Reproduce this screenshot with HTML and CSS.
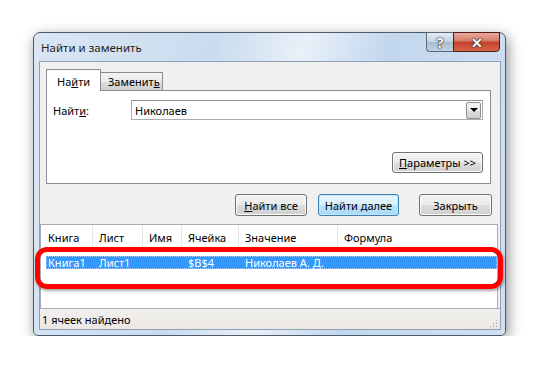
FILE: index.html
```html
<!DOCTYPE html>
<html lang="ru">
  <head>
    <meta charset="UTF-8" />
    <title>Найти и заменить</title>
    <link rel="stylesheet" href="styles.css">
  </head>
  <body>
    <div class="window">
      <div class="titlebar">
        <span class="title">Найти и заменить</span>
        <div class="caption-btn help">?</div>
        <div class="caption-btn close">✕</div>
      </div>

      <div class="client">
        <div class="tabs">
          <div class="tab-strip">
            <div class="tab active">На<u>й</u>ти</div>
            <div class="tab">Заменит<u>ь</u></div>
          </div>
          <div class="tab-panel">
            <div class="find-row">
              <label class="find-label">Найт<u>и</u>:</label>
              <div class="combo">
                <span>Николаев</span>
                <div class="combo-arrow"></div>
              </div>
            </div>
            <div class="options-row">
              <button class="btn"><u>П</u>араметры &gt;&gt;</button>
            </div>
          </div>
        </div>

        <div class="actions">
          <button class="btn btn-all"><u>Н</u>айти все</button>
          <button class="btn btn-default">Найти <u>д</u>алее</button>
          <button class="btn btn-close">Закрыть</button>
        </div>

        <div class="results">
          <div class="results-head">
            <div class="col c1">Книга</div>
            <div class="col c2">Лист</div>
            <div class="col c3">Имя</div>
            <div class="col c4">Ячейка</div>
            <div class="col c5">Значение</div>
            <div class="col c6">Формула</div>
          </div>
          <div class="result-row">
            <div class="col c1">Книга1</div>
            <div class="col c2">Лист1</div>
            <div class="col c3"></div>
            <div class="col c4">$B$4</div>
            <div class="col c5">Николаев А. Д.</div>
            <div class="col c6"></div>
          </div>
          <div class="highlight"></div>
        </div>

        <div class="statusbar">
          <span>1 ячеек найдено</span>
          <div class="grip"></div>
        </div>
      </div>
    </div>
  </body>
</html>
```

FILE: styles.css
```css
* {
  margin: 0;
  padding: 0;
  box-sizing: border-box;
}

body {
  background-color: #ffffff;
  font-family: "Noto Sans", "Liberation Sans", sans-serif;
  font-size: 11px;
  color: #000;
  padding: 32px 0 0 33px;
}

u {
  text-decoration: underline;
  text-underline-offset: 1px;
}

/* Окно */
.window {
  width: 473px;
  height: 304px;
  border: 1px solid #4f5b69;
  border-radius: 7px 7px 5px 5px;
  padding: 0 4px 5px 5px;
  background: linear-gradient(100deg, #d9e6f4 0%, #c9dcef 35%, #e9f0f9 52%, #c2d7ee 68%, #cfe0f2 100%);
  box-shadow: 2px 4px 14px rgba(0, 0, 0, 0.45);
  display: flex;
  flex-direction: column;
}

.titlebar {
  height: 28px;
  display: flex;
  align-items: flex-start;
}

.title {
  flex: 1;
  padding: 7px 0 0 2px;
  font-size: 11.5px;
  color: #1e1e1e;
}

.caption-btn {
  height: 20px;
  margin-top: -1px;
  border: 1px solid #5d6673;
  display: flex;
  justify-content: center;
  align-items: center;
  color: #fff;
  font-weight: bold;
  text-shadow: 0 0 1px #222, 0 0 1px #222, 0 0 2px #333;
}

.help {
  width: 27px;
  border-radius: 0 0 0 4px;
  border-right: none;
  background: linear-gradient(#e2ebf5, #c3d3e4 50%, #a9bccf 51%, #c1d2e3);
  font-size: 14px;
}

.close {
  width: 47px;
  margin-right: 1px;
  border-color: #4e1c16;
  border-radius: 0 0 4px 0;
  background: linear-gradient(#e9a99b, #d47a68 45%, #c2412c 50%, #d6634a);
  font-size: 14px;
}

.client {
  flex: 1;
  background-color: #f0f0f0;
  border: 1px solid #8f9fb4;
  display: flex;
  flex-direction: column;
}

/* Вкладки */
.tabs {
  margin: 7px 9px 0 6px;
}

.tab-strip {
  height: 21px;
  display: flex;
  align-items: flex-end;
}

.tab {
  height: 18px;
  padding: 1px 0 0 7px;
  width: 62px;
  border: 1px solid #898c95;
  border-bottom: none;
  border-left: none;
  background: linear-gradient(#f2f2f2, #ebebeb 50%, #dddddd 51%, #cfcfcf);
}

.tab.active {
  width: 55px;
  height: 22px;
  margin-bottom: -1px;
  padding: 4px 0 0 10px;
  border-left: 1px solid #898c95;
  background: #ffffff;
  position: relative;
}

.tab-panel {
  height: 94px;
  background-color: #ffffff;
  border: 1px solid #898c95;
  padding: 9px 7px 0 6px;
}

.find-row {
  display: flex;
  align-items: center;
}

.find-label {
  width: 78px;
}

.combo {
  width: 352px;
  height: 20px;
  border: 1px solid #abadb3;
  border-top-color: #8e9099;
  display: flex;
  align-items: center;
  padding-left: 3px;
}

.combo span {
  flex: 1;
}

.combo-arrow {
  width: 15px;
  height: 17px;
  margin-right: 1px;
  border: 1px solid #8f8f8f;
  border-radius: 2px;
  background: linear-gradient(#f2f2f2, #ebebeb 50%, #dddddd 51%, #cfcfcf);
  display: flex;
  justify-content: center;
  align-items: center;
}

.combo-arrow::after {
  content: "";
  border-left: 4px solid transparent;
  border-right: 4px solid transparent;
  border-top: 4px solid #000;
}

.options-row {
  display: flex;
  justify-content: flex-end;
  margin-top: 32px;
}

/* Кнопки */
.btn {
  height: 22px;
  font-family: inherit;
  font-size: 11px;
  color: #000;
  border: 1px solid #707070;
  border-radius: 3px;
  background: linear-gradient(#f2f2f2, #ebebeb 50%, #dddddd 51%, #cfcfcf);
  box-shadow: inset 0 0 0 1px #fcfcfc;
}

.options-row .btn {
  width: 91px;
  height: 21px;
}

.actions {
  display: flex;
  justify-content: flex-end;
  margin-top: 10px;
  padding-right: 8px;
}

.btn-all {
  width: 72px;
}

.btn-default {
  width: 81px;
  margin-left: 11px;
  border-color: #3c7fb1;
  background: linear-gradient(#eaf6fd, #d9f0fc 50%, #bee6fd 51%, #a7d9f5);
  box-shadow: inset 0 0 0 1px #c4e6f8;
}

.btn-close {
  width: 73px;
  margin-left: 20px;
}

/* Результаты */
.results {
  position: relative;
  margin: 8px 2px 0 0;
  height: 84px;
  background-color: #ffffff;
  border: 1px solid #a5acb5;
  border-bottom: none;
}

.results-head {
  display: flex;
  height: 25px;
  align-items: center;
}

.results-head .col {
  height: 100%;
  display: flex;
  align-items: center;
  border-right: 1px solid #e5e5e5;
  padding-left: 6px;
}

.c1 { width: 52px; }
.c2 { width: 50px; }
.c3 { width: 39px; }
.c4 { width: 57px; }
.c5 { width: 99px; }
.c6 { flex: 1; }

.results-head .c1 {
  padding-left: 7px;
}

.results-head .c6 {
  border-right: none;
}

.result-row {
  display: flex;
  height: 13px;
  margin: 6px 0 0 5px;
  background-color: #3399ff;
  color: #ffffff;
  outline: 1px dotted #a6d2ff;
  outline-offset: -1px;
  line-height: 13px;
}

.result-row .col {
  padding-left: 6px;
}

.result-row .c1 {
  width: 47px;
  padding-left: 2px;
}

.highlight {
  position: absolute;
  left: -6px;
  top: 22px;
  width: 468px;
  height: 42px;
  border: 5px solid #ff0000;
  border-radius: 12px;
  box-shadow: 1px 2px 3px rgba(0, 0, 0, 0.35);
}

.statusbar {
  height: 21px;
  border-top: 1px solid #a5acb5;
  background: linear-gradient(#f2f0ee, #ebe8e5);
  display: flex;
  align-items: center;
  justify-content: space-between;
  padding: 0 3px 0 2px;
}

.grip {
  width: 8px;
  height: 8px;
  margin-top: 8px;
  background:
    radial-gradient(circle, #a3a3a3 0.8px, transparent 1px) 0 0 / 3px 3px;
  clip-path: polygon(100% 0, 100% 100%, 0 100%);
}
```
